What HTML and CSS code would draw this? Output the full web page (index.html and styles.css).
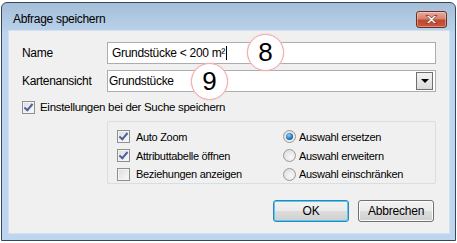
FILE: index.html
```html
<!DOCTYPE html>
<html lang="de">
<head>
  <meta charset="UTF-8" />
  <title>Abfrage speichern</title>
  <link rel="stylesheet" href="styles.css">
</head>
<body>
  <div class="window">
    <div class="titlebar">
      <span class="title">Abfrage speichern</span>
      <span class="close-btn">
        <svg width="13" height="9" viewBox="0 0 13 9"><path d="M1 0.5h3l2.5 2.5 2.5-2.5h3l-4 4 4 4h-3l-2.5-2.5-2.5 2.5h-3l4-4z" fill="#fff" stroke="#7a3424" stroke-width="0.8"/></svg>
      </span>
    </div>
    <div class="client">
      <div class="form-row">
        <label class="field-label">Name</label>
        <div class="textbox">Grundstücke &lt; 200 m²<span class="caret"></span></div>
      </div>
      <div class="form-row">
        <label class="field-label">Kartenansicht</label>
        <div class="textbox combo">
          <span>Grundstücke</span>
          <span class="combo-btn"><span class="arrow"></span></span>
        </div>
      </div>
      <div class="check-row main-check">
        <span class="checkbox checked"></span>
        <span>Einstellungen bei der Suche speichern</span>
      </div>
      <div class="groupbox">
        <div class="group-col">
          <div class="check-row"><span class="checkbox checked"></span><span>Auto Zoom</span></div>
          <div class="check-row"><span class="checkbox checked"></span><span>Attributtabelle öffnen</span></div>
          <div class="check-row"><span class="checkbox"></span><span>Beziehungen anzeigen</span></div>
        </div>
        <div class="group-col">
          <div class="check-row"><span class="radio selected"></span><span>Auswahl ersetzen</span></div>
          <div class="check-row"><span class="radio"></span><span>Auswahl erweitern</span></div>
          <div class="check-row"><span class="radio"></span><span>Auswahl einschränken</span></div>
        </div>
      </div>
      <div class="button-row">
        <button class="btn default">OK</button>
        <button class="btn">Abbrechen</button>
      </div>
      <span class="marker marker-8">8</span>
      <span class="marker marker-9">9</span>
    </div>
  </div>
</body>
</html>
```

FILE: styles.css
```css
html {
  background: #ffffff;
}
body {
  margin: 2px 0 0 1px;
  font-family: "Liberation Sans", Arial, sans-serif;
  font-size: 12px;
  letter-spacing: -0.3px;
  color: #000;
}
.window {
  width: 455px;
  height: 239px;
  box-sizing: border-box;
  border: 1px solid #37475a;
  border-radius: 6px 6px 0 0;
  padding: 0 5px 6px 6px;
  background: linear-gradient(#a6bfd9 0px, #b9d1ea 28px, #bdd5ee 29px, #bdd5ee 100%);
  box-shadow: 0 1px 0 #39c8e0;
  display: flex;
  flex-direction: column;
}
.titlebar {
  height: 28px;
  display: flex;
  align-items: flex-start;
  justify-content: space-between;
}
.title {
  margin: 9px 0 0 5px;
  font-size: 12px;
  color: #000;
}
.close-btn {
  margin: 8px 3px 0 0;
  width: 29px;
  height: 15px;
  border: 1px solid #6f2d22;
  border-radius: 3px;
  background: linear-gradient(#e7aa9c 0%, #d8826d 45%, #c24730 55%, #c8573c 100%);
  box-shadow: inset 0 0 0 1px rgba(255,255,255,0.35);
  display: flex;
  align-items: center;
  justify-content: center;
}
.client {
  position: relative;
  flex: 1;
  background: #f0f0f0;
  border: 1px solid #d4e0ee;
  margin: -1px 0 0 0;
  padding: 11px 13px 0 13px;
}
.form-row {
  display: flex;
  align-items: center;
  height: 22px;
  margin-bottom: 6px;
}
.field-label {
  width: 85px;
  flex-shrink: 0;
}
.textbox {
  flex: 1;
  height: 22px;
  box-sizing: border-box;
  border: 1px solid #abadb3;
  background: #fff;
  padding: 0 4px;
  display: flex;
  align-items: center;
}
.caret {
  display: inline-block;
  width: 1px;
  height: 14px;
  background: #000;
  margin-left: 1px;
}
.combo {
  padding: 0 2px 0 1px;
  justify-content: space-between;
}
.combo-btn {
  width: 15px;
  height: 16px;
  border: 1px solid #707070;
  background: linear-gradient(#f2f2f2, #dcdcdc);
  display: flex;
  align-items: center;
  justify-content: center;
}
.arrow {
  width: 0;
  height: 0;
  border-left: 4px solid transparent;
  border-right: 4px solid transparent;
  border-top: 4px solid #000;
}
.check-row {
  display: flex;
  align-items: center;
  gap: 5px;
  height: 18px;
}
.main-check {
  margin-top: 5px;
  font-size: 11.5px;
}
.checkbox {
  width: 11px;
  height: 11px;
  border: 1px solid #8e8f8f;
  background: linear-gradient(135deg, #dcdcdc, #fbfbfb);
  box-shadow: inset 0 0 0 1px #f4f4f4;
  position: relative;
  flex-shrink: 0;
}
.checkbox.checked::after {
  content: "";
  position: absolute;
  left: 3px;
  top: 0px;
  width: 3px;
  height: 7px;
  border: solid #4d61a0;
  border-width: 0 2px 2px 0;
  transform: rotate(40deg);
}
.radio {
  width: 11px;
  height: 11px;
  border: 1px solid #9a9a9a;
  border-radius: 50%;
  background: radial-gradient(circle at 60% 65%, #f8f8f8, #d8d8d8);
  flex-shrink: 0;
  position: relative;
}
.radio.selected::after {
  content: "";
  position: absolute;
  left: 2px;
  top: 2px;
  width: 7px;
  height: 7px;
  border-radius: 50%;
  background: radial-gradient(circle at 40% 35%, #8fd2f7, #1b6fb8 60%, #0d4f8c);
}
.groupbox {
  margin: 5px 0 0 85px;
  height: 63px;
  box-sizing: border-box;
  border: 1px solid #d5dfe5;
  border-radius: 2px;
  padding: 6px 0 0 9px;
  display: flex;
  font-size: 11px;
  letter-spacing: -0.3px;
}
.group-col {
  display: flex;
  flex-direction: column;
  gap: 1px;
}
.group-col:first-child {
  width: 166px;
}
.group-col .check-row {
  gap: 6px;
}
.group-col .radio + span {
  margin-left: -3px;
}
.button-row {
  display: flex;
  justify-content: flex-end;
  gap: 9px;
  margin: 16px 2px 0 0;
}
.btn {
  width: 76px;
  height: 22px;
  font-family: "Liberation Sans", Arial, sans-serif;
  font-size: 12px;
  letter-spacing: -0.2px;
  border: 1px solid #707070;
  border-radius: 3px;
  background: linear-gradient(#f2f2f2 0%, #ebebeb 50%, #dddddd 51%, #cfcfcf 100%);
  box-shadow: inset 0 0 0 1px #fbfbfb;
  padding: 0;
}
.btn.default {
  border-color: #3c7fb1;
  box-shadow: inset 0 0 0 1px #48d0f8;
}
.marker {
  position: absolute;
  width: 35px;
  height: 35px;
  border-radius: 50%;
  background: #fff;
  border: 1px solid #f2a7a7;
  box-shadow: 0 0 2px #f7c4c4;
  font-size: 26px;
  letter-spacing: 0;
  line-height: 35px;
  text-align: center;
  color: #000;
}
.marker-8 {
  left: 238px;
  top: 3px;
}
.marker-9 {
  left: 182px;
  top: 32px;
}
```
